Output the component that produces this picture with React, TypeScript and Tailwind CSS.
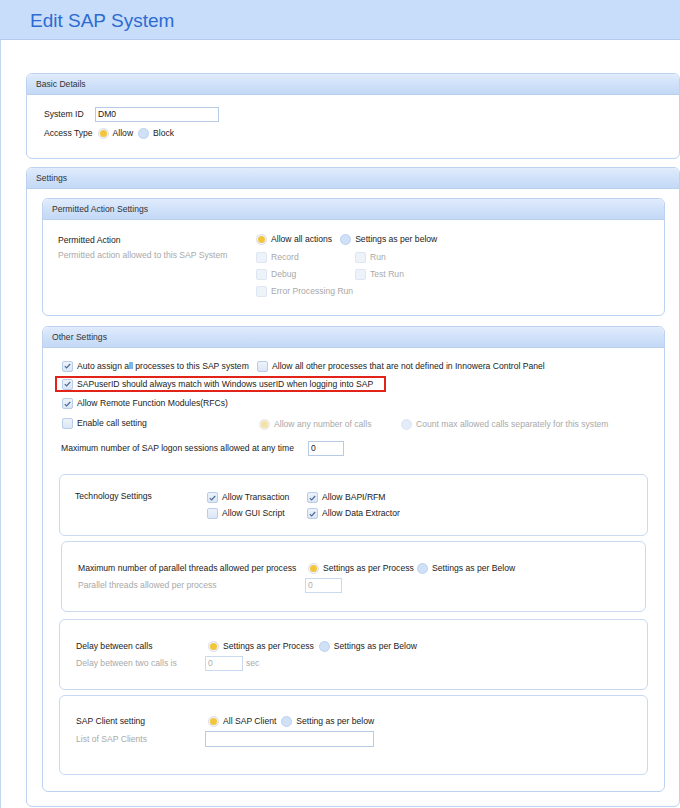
import React from 'react';

type ToggleProps = { label?: string; checked?: boolean; disabled?: boolean };

const Radio: React.FC<ToggleProps> = ({ label, checked, disabled }) => (
  <span className={`inline-flex items-center gap-[4px] whitespace-nowrap ${disabled ? 'text-[#a9a9a9]' : 'text-[#222]'}`}>
    <span
      className={`w-[11px] h-[11px] rounded-full border flex items-center justify-center shrink-0 ${
        checked
          ? disabled
            ? 'border-[#e6e6e6] bg-[#f7f3e2]'
            : 'border-[#d9dde3] bg-[#f4f4f4]'
          : disabled
          ? 'border-[#dbe6f5] bg-[#e3ecf8]'
          : 'border-[#bcd2f0] bg-[#cfe0f7]'
      }`}
    >
      {checked && (
        <span className={`w-[7px] h-[7px] rounded-full ${disabled ? 'bg-[#f3e2a6]' : 'bg-[#f2c53d]'}`} />
      )}
    </span>
    {label}
  </span>
);

const Check: React.FC<ToggleProps> = ({ label, checked, disabled }) => (
  <span className={`inline-flex items-center gap-[4px] whitespace-nowrap ${disabled ? 'text-[#a9a9a9]' : 'text-[#222]'}`}>
    <span
      className={`w-[11px] h-[11px] rounded-[2px] border flex items-center justify-center shrink-0 ${
        disabled ? 'border-[#dde6f2] bg-[#eef3fa]' : 'border-[#b9cce8] bg-gradient-to-b from-[#eef3fb] to-[#dbe6f6]'
      }`}
    >
      {checked && (
        <svg width="7" height="6" viewBox="0 0 7 6">
          <path d="M0.8 3.2 L2.6 5 L6.2 1" fill="none" stroke="#4a6a9a" strokeWidth="1.2" />
        </svg>
      )}
    </span>
    {label}
  </span>
);

const Field: React.FC<{ w: string; value?: string; disabled?: boolean }> = ({ w, value, disabled }) => (
  <span
    className={`${w} h-[15px] border flex items-center px-[2px] ${
      disabled ? 'border-[#c9daf0] text-[#b0b0b0]' : 'border-[#b7cbe6] text-[#222]'
    } bg-white`}
  >
    {value}
  </span>
);

const Panel: React.FC<{ title: string; className?: string; bodyClass?: string; children: React.ReactNode }> = ({
  title,
  className = '',
  bodyClass = '',
  children,
}) => (
  <div className={`border border-[#bcd2ef] rounded-[6px] bg-white ${className}`}>
    <div className="h-[21px] rounded-t-[6px] bg-gradient-to-b from-[#e1ecfc] via-[#d0e1f9] to-[#c4d9f6] border-b border-[#b9cfee] flex items-center pl-[9px] text-[#333]">
      {title}
    </div>
    <div className={bodyClass}>{children}</div>
  </div>
);

const Box: React.FC<{ className?: string; children: React.ReactNode }> = ({ className = '', children }) => (
  <div className={`border border-[#c8d9f1] rounded-[6px] ${className}`}>{children}</div>
);

const App: React.FC = () => {
  return (
    <div
      className="w-[680px] h-[808px] bg-white text-[8.6px] leading-[11px] text-[#222] overflow-hidden whitespace-nowrap"
      style={{ fontFamily: '"Liberation Sans", Arial, sans-serif' }}
    >
      <header className="h-[40px] bg-[#c8ddf9] border-b border-[#b3cced] flex items-center pl-[30px]">
        <h1 className="text-[19px] leading-none text-[#2d6bd3] pt-[1px]">Edit SAP System</h1>
      </header>

      <div className="border-l border-[#c2d6f2] h-[768px] pl-[25px] pt-[33px]">
        <Panel title="Basic Details" bodyClass="h-[63px] pl-[17px] pt-[12px]">
          <div className="flex items-center h-[15px]">
            <span className="w-[51px]">System ID</span>
            <Field w="w-[124px]" value="DM0" />
          </div>
          <div className="flex items-center h-[11px] mt-[6px]">
            <span className="mr-[5px]">Access Type</span>
            <Radio label="Allow" checked />
            <span className="w-[5px]" />
            <Radio label="Block" />
          </div>
        </Panel>

        <Panel title="Settings" className="mt-[8px]" bodyClass="pl-[15px] pr-[14px] pt-[9px] pb-[14px]">
          <Panel title="Permitted Action Settings" bodyClass="h-[95px] pl-[15px] pt-[14px] flex">
            <div className="w-[198px] flex flex-col">
              <span className="h-[11px] mt-[1px]">Permitted Action</span>
              <span className="text-[#a9a9a9] mt-[4px]">Permitted action allowed to this SAP System</span>
            </div>
            <div className="flex flex-col">
              <div className="flex items-center gap-[8px] h-[11px]">
                <Radio label="Allow all actions" checked />
                <Radio label="Settings as per below" />
              </div>
              <div className="grid grid-cols-[99px_auto] gap-y-[6px] mt-[7px]">
                <Check label="Record" disabled />
                <Check label="Run" disabled />
                <Check label="Debug" disabled />
                <Check label="Test Run" disabled />
                <Check label="Error Processing Run" disabled />
              </div>
            </div>
          </Panel>

          <Panel title="Other Settings" className="mt-[10px]" bodyClass="pt-[13px] pb-[16px]">
            <div className="pl-[19px] flex flex-col">
              <div className="flex items-center h-[11px]">
                <span className="w-[195px]">
                  <Check label="Auto assign all processes to this SAP system" checked />
                </span>
                <Check label="Allow all other processes that are not defined in Innowera Control Panel" />
              </div>
              <div className="ml-[-7px] mt-[4px] w-[331px] h-[16px] border-2 border-[#e2231a] flex items-center pl-[5px]">
                <Check label="SAPuserID should always match with Windows userID when logging into SAP" checked />
              </div>
              <div className="flex items-center h-[11px] mt-[6px]">
                <Check label="Allow Remote Function Modules(RFCs)" checked />
              </div>
              <div className="flex items-center h-[11px] mt-[10px]">
                <span className="w-[197px]">
                  <Check label="Enable call setting" />
                </span>
                <span className="w-[142px]">
                  <Radio label="Allow any number of calls" checked disabled />
                </span>
                <Radio label="Count max allowed calls separately for this system" disabled />
              </div>
              <div className="flex items-center h-[15px] mt-[11px] ml-[-1px]">
                <span className="w-[247px]">Maximum number of SAP logon sessions allowed at any time</span>
                <Field w="w-[36px]" value="0" />
              </div>
            </div>

            <div className="mx-[16px] mt-[18px] flex flex-col">
              <Box className="h-[62px] pl-[15px] pt-[16px] flex items-start">
                <span className="w-[132px]">Technology Settings</span>
                <div className="grid grid-cols-[100px_auto] gap-y-[5px] mt-[1px]">
                  <Check label="Allow Transaction" checked />
                  <Check label="Allow BAPI/RFM" checked />
                  <Check label="Allow GUI Script" />
                  <Check label="Allow Data Extractor" checked />
                </div>
              </Box>

              <Box className="mx-[2px] mt-[5px] h-[71px] pl-[16px] pt-[21px]">
                <div className="flex items-center h-[11px]">
                  <span className="w-[230px]">Maximum number of parallel threads allowed per process</span>
                  <span className="w-[109px]">
                    <Radio label="Settings as per Process" checked />
                  </span>
                  <Radio label="Settings as per Below" />
                </div>
                <div className="flex items-center h-[15px] mt-[4px]">
                  <span className="w-[227px] text-[#a9a9a9]">Parallel threads allowed per process</span>
                  <Field w="w-[37px]" value="0" disabled />
                </div>
              </Box>

              <Box className="mt-[7px] h-[71px] pl-[16px] pt-[21px]">
                <div className="flex items-center h-[11px]">
                  <span className="w-[132px]">Delay between calls</span>
                  <span className="flex items-center gap-[5px]">
                    <Radio label="Settings as per Process" checked />
                    <Radio label="Settings as per Below" />
                  </span>
                </div>
                <div className="flex items-center h-[15px] mt-[4px]">
                  <span className="w-[129px] text-[#a9a9a9]">Delay between two calls is</span>
                  <Field w="w-[38px]" value="0" disabled />
                  <span className="ml-[3px] text-[#a9a9a9]">sec</span>
                </div>
              </Box>

              <Box className="mt-[5px] h-[80px] pl-[16px] pt-[20px]">
                <div className="flex items-center h-[11px]">
                  <span className="w-[132px]">SAP Client setting</span>
                  <span className="flex items-center gap-[5px]">
                    <Radio label="All SAP Client" checked />
                    <Radio label="Setting as per below" />
                  </span>
                </div>
                <div className="flex items-center h-[16px] mt-[4px]">
                  <span className="w-[129px] text-[#a9a9a9]">List of SAP Clients</span>
                  <Field w="w-[169px] h-[16px]" />
                </div>
              </Box>
            </div>
          </Panel>
        </Panel>
      </div>
    </div>
  );
};

export default App;
